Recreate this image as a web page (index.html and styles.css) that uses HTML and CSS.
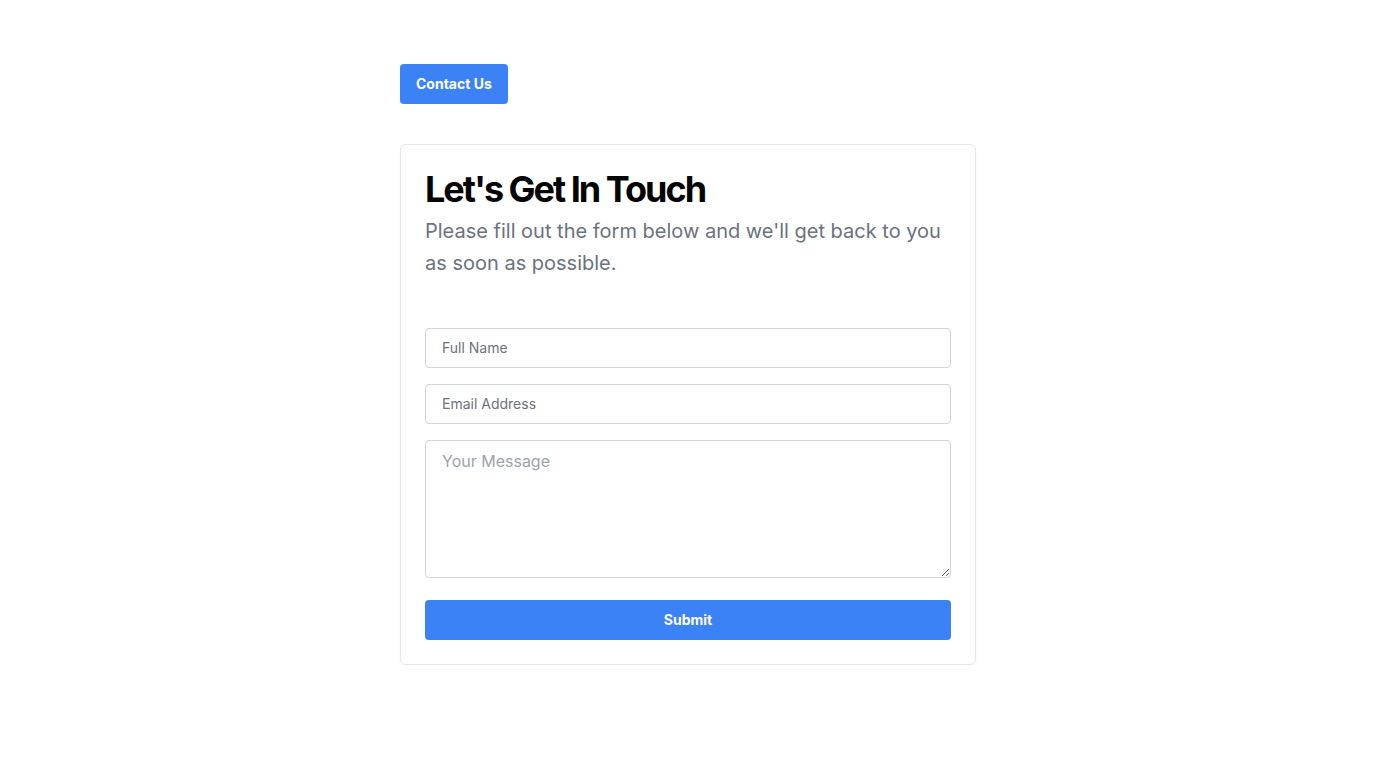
FILE: index.html
```
<!DOCTYPE html>
<html lang="en">
<head>
<meta charset="utf-8">
<title>Contact</title>
<link rel="stylesheet" href="styles.css">
</head>
<body>
<div class="page">
  <button class="btn-contact" type="button">Contact Us</button>
  <div class="card">
    <h1 class="title">Let's Get In Touch</h1>
    <p class="subtitle">Please fill out the form below and we'll get back to you as soon as possible.</p>
    <form class="form">
      <input class="field" type="text" placeholder="Full Name">
      <input class="field" type="email" placeholder="Email Address">
      <textarea class="field area" placeholder="Your Message"></textarea>
      <button class="btn-submit" type="button">Submit</button>
    </form>
  </div>
</div>
</body>
</html>
```
FILE: styles.css
```
* { box-sizing: border-box; }
html, body { margin: 0; padding: 0; background: #fff; }
body { font-family: Inter, "Noto Sans", sans-serif; color: #111827; }
.page {
  width: 576px;
  margin: 0 auto;
  padding-top: 64px;
  display: flex;
  flex-direction: column;
  align-items: flex-start;
}
.btn-contact {
  background: #3b82f6;
  color: #fff;
  border: none;
  border-radius: 4px;
  height: 40px;
  padding: 0 16px 2px;
  font-family: Inter, sans-serif;
  font-weight: 700;
  font-size: 14px;
  margin-bottom: 40px;
}
.card {
  width: 576px;
  border: 1px solid #e5e7eb;
  border-radius: 6px;
  padding: 24px;
  box-shadow: 0 1px 2px rgba(0,0,0,0.04);
}
.title {
  margin: 0;
  font-size: 36px;
  line-height: 40px;
  font-weight: 700;
  letter-spacing: -2px;
  color: #050505;
}
.subtitle {
  margin: 6px 0 49px;
  font-size: 20px;
  line-height: 32px;
  color: #6b7280;
}
.form {
  display: flex;
  flex-direction: column;
  gap: 16px;
}
.field {
  width: 100%;
  height: 40px;
  border: 1px solid #d1d5db;
  border-radius: 4px;
  padding: 0 16px 2px;
  font-family: Inter, sans-serif;
  font-size: 14px;
  color: #111827;
  outline: none;
}
.field::placeholder { color: #6b7280; }
.area {
  height: 138px;
  padding: 8px 16px;
  font-size: 16px;
  line-height: 24px;
  resize: vertical;
}
.area::placeholder { color: #9ca3af; }
.btn-submit {
  margin-top: 6px;
  height: 40px;
  width: 100%;
  background: #3b82f6;
  color: #fff;
  border: none;
  border-radius: 4px;
  padding-bottom: 2px;
  font-family: Inter, sans-serif;
  font-weight: 700;
  font-size: 14px;
}
```
